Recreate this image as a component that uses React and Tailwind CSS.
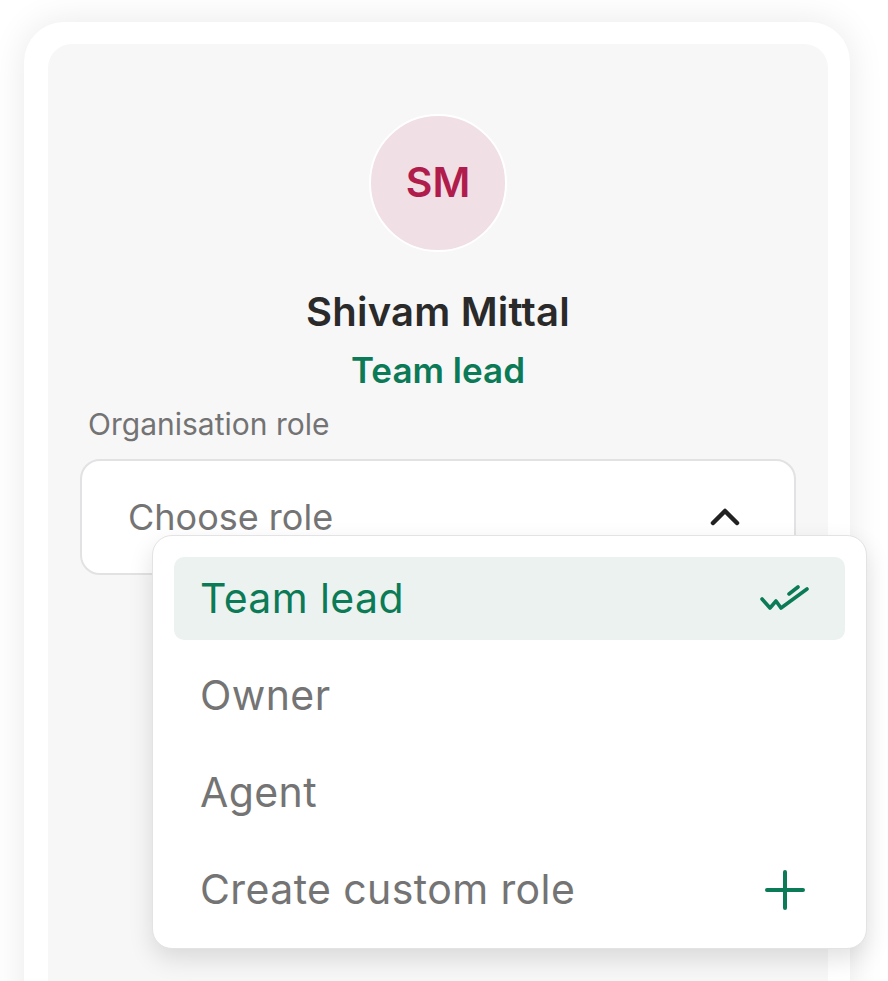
import React from "react";

const roles = [
  { name: "Team lead", selected: true },
  { name: "Owner" },
  { name: "Agent" },
  { name: "Create custom role", add: true },
];

function DoubleCheck() {
  return (
    <svg width="52" height="28" viewBox="0 0 52 28" fill="none" stroke="#0b7a56" strokeWidth="3.6" strokeLinecap="round" strokeLinejoin="round">
      <path d="M3 14 L11 23 L17 16 L22 23 L48 4" />
      <path d="M30 9 L39 2" />
    </svg>
  );
}

function Plus() {
  return (
    <svg width="40" height="40" viewBox="0 0 40 40" fill="none" stroke="#0b7a56" strokeWidth="4" strokeLinecap="round">
      <path d="M20 2 V38 M2 20 H38" />
    </svg>
  );
}

function ChevronUp() {
  return (
    <svg width="30" height="20" viewBox="0 0 30 20" fill="none" stroke="#222222" strokeWidth="4.5" strokeLinecap="round" strokeLinejoin="round">
      <path d="M3 16 L15 4 L27 16" />
    </svg>
  );
}

export default function App() {
  return (
    <div className="h-[981px] overflow-hidden bg-white pt-[22px] font-['Inter',sans-serif]">
      {/* outer white card */}
      <div className="ml-[24px] h-[1100px] w-[826px] rounded-[40px] bg-white pl-[24px] pr-[22px] pt-[22px] shadow-[0_0_36px_rgba(0,0,0,0.09)]">
        {/* inner grey panel */}
        <div className="flex h-full flex-col items-center rounded-[24px] bg-[#f7f7f8] px-[32px] pt-[70px]">
          <div className="flex h-[138px] w-[138px] items-center justify-center rounded-full border-[2px] border-white bg-[#f0dfe5]">
            <span className="text-[41px] font-semibold text-[#b01c4c]">SM</span>
          </div>

          <h1 className="mt-[36px] text-[40px] leading-[48px] font-semibold tracking-[0.2px] text-[#2a2a2a]">
            Shivam Mittal
          </h1>
          <p className="mt-[13px] text-[35px] leading-[42px] font-semibold text-[#0b7a56]">
            Team lead
          </p>

          <p className="mt-[16px] self-start pl-[8px] text-[30px] leading-[34px] text-[#737373]">
            Organisation role
          </p>

          {/* select + open menu */}
          <div className="relative mt-[18px] w-full">
            <div className="flex h-[116px] items-center justify-between rounded-[20px] border-2 border-[#e2e2e4] bg-white pl-[46px] pr-[54px]">
              <span className="text-[36px] text-[#747474]">Choose role</span>
              <ChevronUp />
            </div>

            <div className="absolute left-[72px] top-[76px] flex w-[715px] flex-col gap-[14px] rounded-[20px] border border-[#e3e3e5] bg-white px-[21px] pb-[17px] pt-[21px] shadow-[0_10px_24px_rgba(0,0,0,0.12)]">
              {roles.map((r) => (
                <div
                  key={r.name}
                  className={`flex h-[83px] items-center justify-between rounded-[10px] pl-[26px] ${
                    r.selected ? "bg-[#ecf2ef] pr-[34px]" : "pr-[40px]"
                  }`}
                >
                  <span
                    className={`text-[41px] tracking-[0.4px] ${
                      r.selected ? "text-[#0b7a56]" : "text-[#747474]"
                    }`}
                  >
                    {r.name}
                  </span>
                  {r.selected && <DoubleCheck />}
                  {r.add && <Plus />}
                </div>
              ))}
            </div>
          </div>
        </div>
      </div>
    </div>
  );
}
